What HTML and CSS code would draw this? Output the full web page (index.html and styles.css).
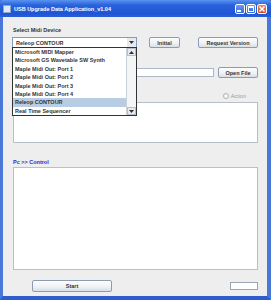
FILE: index.html
```html
<!DOCTYPE html>
<html lang="en">
<head>
    <meta charset="UTF-8">
    <title>USB Upgrade Data Application_v1.04</title>
    <link rel="stylesheet" href="styles.css">
</head>
<body>
    <div class="window">
        <div class="titlebar">
            <span class="app-icon"></span>
            <span class="title">USB Upgrade Data Application_v1.04</span>
            <div class="title-buttons">
                <span class="tbtn"><svg width="8" height="8" viewBox="0 0 8 8"><rect x="1" y="5" width="4" height="2" fill="#fff"/></svg></span>
                <span class="tbtn"><svg width="8" height="8" viewBox="0 0 8 8"><rect x="1.5" y="1.5" width="5" height="5" fill="none" stroke="#fff"/><rect x="1" y="1" width="6" height="2" fill="#fff"/></svg></span>
                <span class="tbtn close"><svg width="8" height="8" viewBox="0 0 8 8"><path d="M1.5 1.5 L6.5 6.5 M6.5 1.5 L1.5 6.5" stroke="#fff" stroke-width="1.6"/></svg></span>
            </div>
        </div>
        <div class="content">
            <div class="label">Select Midi Device</div>
            <div class="device-row">
                <div class="combo">
                    <span class="combo-text">Releop CONTOUR</span>
                    <span class="combo-arrow"><svg width="5" height="3" viewBox="0 0 5 3"><path d="M0 0 H5 L2.5 3 Z" fill="#333"/></svg></span>
                    <div class="dropdown">
                        <div class="items">
                            <div class="item">Microsoft MIDI Mapper</div>
                            <div class="item">Microsoft GS Wavetable SW Synth</div>
                            <div class="item">Maple Midi Out: Port 1</div>
                            <div class="item">Maple Midi Out: Port 2</div>
                            <div class="item">Maple Midi Out: Port 3</div>
                            <div class="item">Maple Midi Out: Port 4</div>
                            <div class="item selected">Releop CONTOUR</div>
                            <div class="item">Real Time Sequencer</div>
                        </div>
                        <div class="scrollbar">
                            <span class="sb-btn"><svg width="5" height="3" viewBox="0 0 5 3"><path d="M0 3 H5 L2.5 0 Z" fill="#333"/></svg></span>
                            <span class="sb-track"></span>
                            <span class="sb-btn"><svg width="5" height="3" viewBox="0 0 5 3"><path d="M0 0 H5 L2.5 3 Z" fill="#333"/></svg></span>
                        </div>
                    </div>
                </div>
                <button class="btn btn-initial">Initial</button>
                <button class="btn btn-version">Request Version</button>
            </div>
            <div class="file-row">
                <div class="field file-field"></div>
                <button class="btn btn-open">Open File</button>
            </div>
            <div class="radio-row">
                <span class="radio"></span>
                <span class="radio-label">Action</span>
            </div>
            <div class="textarea log"></div>
            <div class="label blue">Pc &gt;&gt; Control</div>
            <div class="textarea control"></div>
            <div class="bottom-row">
                <button class="btn btn-start">Start</button>
                <div class="field small-field"></div>
            </div>
        </div>
    </div>
</body>
</html>
```

FILE: styles.css
```css
body {
    margin: 0;
    padding: 0;
    font-family: "Liberation Sans", Arial, sans-serif;
    font-size: 5.5px;
    font-weight: bold;
    color: #333;
}
.window {
    width: 271px;
    height: 300px;
    box-sizing: border-box;
    display: flex;
    flex-direction: column;
    background: #eeeeee;
    border-left: 3px solid #4a78d8;
    border-right: 4px solid #4a78d8;
    border-bottom: 4px solid #2f5ccf;
}
.titlebar {
    height: 17px;
    margin-left: -3px;
    margin-right: -4px;
    display: flex;
    align-items: center;
    padding: 0 4px 0 3px;
    background: linear-gradient(#5a94f0, #2a62dc 30%, #1f55d4 80%, #2a5fd8);
    border-radius: 4px 4px 0 0;
}
.app-icon {
    width: 6px;
    height: 6px;
    margin-right: 3px;
    background: #dfe8f7;
    border: 1px solid #8aa4cf;
}
.title {
    color: #fff;
    font-size: 5.5px;
    flex: 1;
}
.title-buttons {
    display: flex;
    gap: 1px;
}
.tbtn {
    width: 8px;
    height: 8px;
    display: flex;
    align-items: center;
    justify-content: center;
    background: linear-gradient(#6a9cf5, #2f66e0);
    border: 1px solid #fff;
    border-radius: 2px;
}
.tbtn.close {
    background: linear-gradient(#ee8a6a, #d24a24);
}
.content {
    flex: 1;
    padding: 10px 9px 0 10px;
    display: flex;
    flex-direction: column;
}
.label {
    height: 6px;
    line-height: 6px;
}
.label.blue {
    color: #2b2bc4;
    margin-top: 16px;
}
.device-row {
    display: flex;
    align-items: center;
    margin-top: 4px;
    height: 11px;
}
.combo {
    position: relative;
    width: 125px;
    height: 11px;
    margin-left: -1px;
    box-sizing: border-box;
    border: 1px solid #7f9db9;
    background: #fff;
    display: flex;
    align-items: center;
}
.combo-text {
    flex: 1;
    padding-left: 3px;
}
.combo-arrow {
    width: 9px;
    height: 9px;
    display: flex;
    align-items: center;
    justify-content: center;
    background: #e6e9ee;
}
.dropdown {
    position: absolute;
    left: -1px;
    top: 9px;
    width: 125px;
    height: 69px;
    box-sizing: border-box;
    border: 1px solid #333;
    background: #fff;
    display: flex;
}
.items {
    flex: 1;
}
.item {
    height: 8.4px;
    line-height: 8.4px;
    padding-left: 2px;
    white-space: nowrap;
}
.item.selected {
    background: #b8cde3;
}
.scrollbar {
    width: 9px;
    display: flex;
    flex-direction: column;
    border-left: 1px solid #ccd2da;
}
.sb-btn {
    height: 8px;
    display: flex;
    align-items: center;
    justify-content: center;
    background: #e6e9ee;
    border: 1px solid #b7bfcb;
    box-sizing: border-box;
}
.sb-track {
    flex: 1;
    background: #f4f5f7;
}
.btn {
    font-family: "Liberation Sans", Arial, sans-serif;
    font-size: 5.5px;
    font-weight: bold;
    color: #333;
    padding: 0;
    height: 11px;
    box-sizing: border-box;
    border: 1px solid #8c9db3;
    border-radius: 2px;
    background: linear-gradient(#fdfdfd, #eef0f4 60%, #d8dde6);
}
.btn-initial {
    width: 31px;
    margin-left: 12px;
}
.btn-version {
    width: 60px;
    margin-left: 18px;
}
.file-row {
    display: flex;
    align-items: center;
    margin-top: 19px;
    height: 11px;
}
.field {
    background: #fff;
    border: 1px solid #aab8c8;
    box-sizing: border-box;
}
.file-field {
    width: 201px;
    height: 9px;
}
.btn-open {
    width: 40px;
    margin-left: 4px;
}
.radio-row {
    display: flex;
    align-items: center;
    justify-content: flex-end;
    margin-top: 15px;
    height: 6px;
    padding-right: 12px;
    color: #9a9a9a;
    font-weight: normal;
}
.radio {
    width: 4px;
    height: 4px;
    border: 1px solid #a8b2bf;
    border-radius: 50%;
    background: #f7f7f7;
    margin-right: 2px;
}
.textarea {
    background: #fff;
    border: 1px solid #b9bfc8;
    box-sizing: border-box;
}
.log {
    margin-top: 3px;
    height: 41px;
}
.control {
    margin-top: 2px;
    height: 103px;
}
.bottom-row {
    display: flex;
    align-items: center;
    margin-top: 10px;
    height: 12px;
}
.btn-start {
    width: 80px;
    height: 12px;
    margin-left: 19px;
}
.small-field {
    width: 28px;
    height: 8px;
    margin-left: auto;
    border-color: #9aa6b4;
}
```
